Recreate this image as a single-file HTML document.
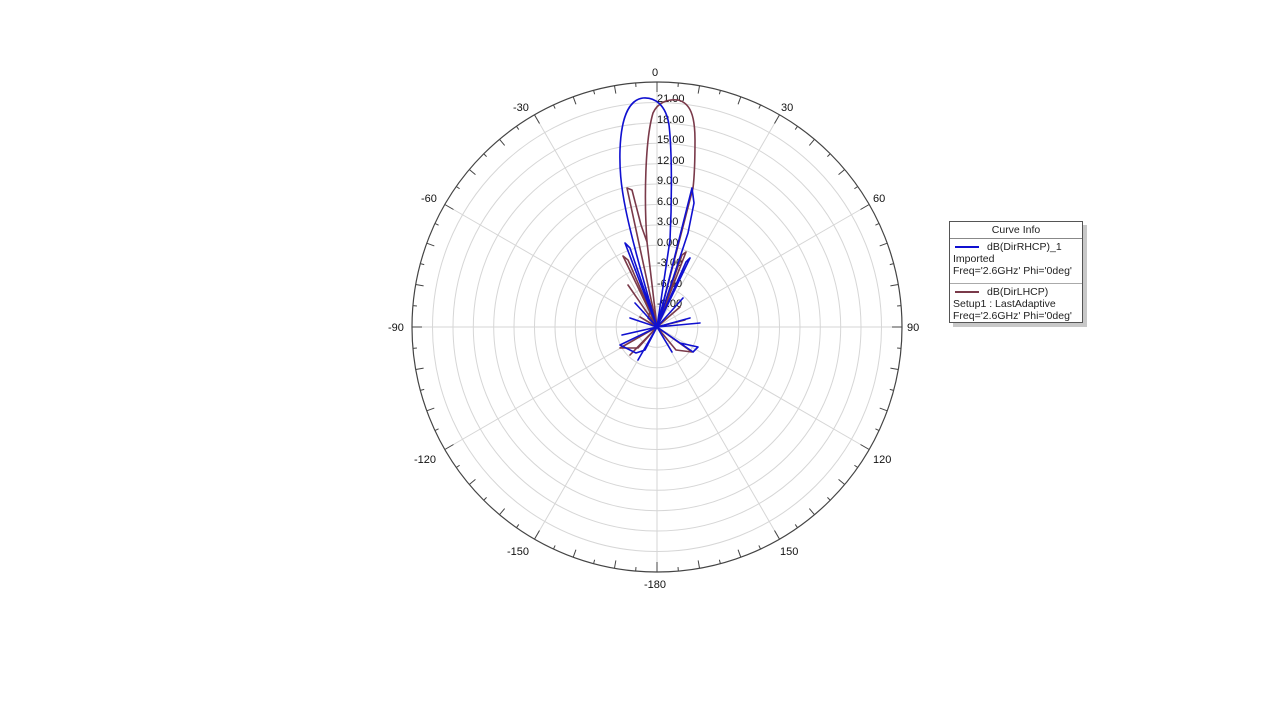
<!DOCTYPE html>
<html><head><meta charset="utf-8"><style>
html,body{margin:0;padding:0;background:#fff;width:1280px;height:709px;overflow:hidden}
svg text{font-family:"Liberation Sans",Arial,sans-serif;font-size:11px;fill:#111}
.lg{position:absolute;left:949px;top:221px;width:132px;height:100px;border:1px solid #555;background:#fff;box-shadow:4px 4px 0 #c8c8c8;font-family:"Liberation Sans",Arial,sans-serif;font-size:10.5px;color:#222;line-height:12px}
.lg .t{text-align:center;border-bottom:1px solid #888;height:16px;line-height:17px}
.lg .s{padding:2px 3px;height:40px}
.lg .s+.s{border-top:1px solid #aaa}
.ln{display:inline-block;width:24px;height:2px;vertical-align:middle;margin:0 8px 0 2px}
</style></head><body>
<svg width="1280" height="709" style="position:absolute;left:0;top:0">
<g fill="none" stroke="#d6d6d6" stroke-width="1">
<circle cx="657" cy="327" r="20.4"/><circle cx="657" cy="327" r="40.8"/><circle cx="657" cy="327" r="61.2"/><circle cx="657" cy="327" r="81.7"/><circle cx="657" cy="327" r="102"/><circle cx="657" cy="327" r="122.5"/><circle cx="657" cy="327" r="143"/><circle cx="657" cy="327" r="163.3"/><circle cx="657" cy="327" r="183.7"/><circle cx="657" cy="327" r="204"/><circle cx="657" cy="327" r="224.5"/>
<line x1="657" y1="82" x2="657" y2="572"/>
<line x1="412" y1="327" x2="902" y2="327"/>
<line x1="534.5" y1="114.8" x2="779.5" y2="539.2"/>
<line x1="779.5" y1="114.8" x2="534.5" y2="539.2"/>
<line x1="444.8" y1="204.5" x2="869.2" y2="449.5"/>
<line x1="869.2" y1="204.5" x2="444.8" y2="449.5"/>
</g>
<circle cx="657" cy="327" r="245" fill="none" stroke="#444" stroke-width="1.2"/>
<g id="ticks" stroke="#444" stroke-width="1"></g>
<text x="652" y="76">0</text><text x="513" y="111">-30</text><text x="781" y="111">30</text>
<text x="421" y="202">-60</text><text x="873" y="202">60</text>
<text x="388" y="331">-90</text><text x="907" y="331">90</text>
<text x="414" y="463">-120</text><text x="873" y="463">120</text>
<text x="507" y="555">-150</text><text x="780" y="555">150</text>
<text x="644" y="588">-180</text>
<g style="font-size:12px" fill="#333">
<text x="657" y="102">21.00</text><text x="657" y="123">18.00</text><text x="657" y="143">15.00</text><text x="657" y="164">12.00</text><text x="657" y="184">9.00</text><text x="657" y="205">6.00</text><text x="657" y="225">3.00</text><text x="657" y="246">0.00</text><text x="657" y="266">-3.00</text><text x="657" y="287">-6.00</text><text x="657" y="307">-9.00</text>
</g>
<g fill="none" stroke-width="1.6" stroke-linejoin="round">
<path stroke="#7a3a4a" d="M657,327 L647,242 C644,200 645,140 653,113 C658,102 668,99 678,100 C690,103 695,115 695,140 C695,165 694,180 693,188 L657,327 M657,327 L627,188 L632,190 L641,225 L647,242 M657,327 L623,256 L628,260 L657,327 L628,285 L657,327 L682,255 L686,252 L657,327 L640,317 L657,327 L620,348 L638,348 L657,327 L676,350 L692,352 L657,327 L680,307 L657,327 L648,318 L652,306 L657,327 L630,355 L657,327 L685,320 L657,327"/>
<path stroke="#1010d0" d="M657,327 L670,240 C672,200 672,150 669,125 C666,105 655,97 643,98 C628,100 621,120 620,150 C619,185 624,215 657,327 M657,327 L692,188 L694,203 L688,233 L657,327 L625,243 L630,248 L657,327 L690,258 L686,262 L657,327 L622,335 L657,327 L620,345 L636,353 L645,350 L657,327 L680,343 L698,347 L693,352 L657,327 L700,323 L657,327 L630,318 L657,327 L690,318 L657,327 L635,303 L657,327 L683,298 L657,327 L638,360 L657,327 L672,352 L657,327"/>
</g>
</svg>
<script>
var g=document.getElementById('ticks'),s='';
for(var a=0;a<360;a+=5){var r=a*Math.PI/180,l=(a%10==0)?8:4;if(a%30==0)l=10;
var x1=657+245*Math.sin(r),y1=327-245*Math.cos(r),x2=657+(245-l)*Math.sin(r),y2=327-(245-l)*Math.cos(r);
s+='<line x1="'+x1+'" y1="'+y1+'" x2="'+x2+'" y2="'+y2+'"/>';}
g.innerHTML=s;
</script>
<div class="lg">
<div class="t">Curve Info</div>
<div class="s"><span class="ln" style="background:#1010d0"></span>dB(DirRHCP)_1<br>Imported<br>Freq='2.6GHz' Phi='0deg'</div>
<div class="s"><span class="ln" style="background:#7a3a4a"></span>dB(DirLHCP)<br>Setup1 : LastAdaptive<br>Freq='2.6GHz' Phi='0deg'</div>
</div>
</body></html>
